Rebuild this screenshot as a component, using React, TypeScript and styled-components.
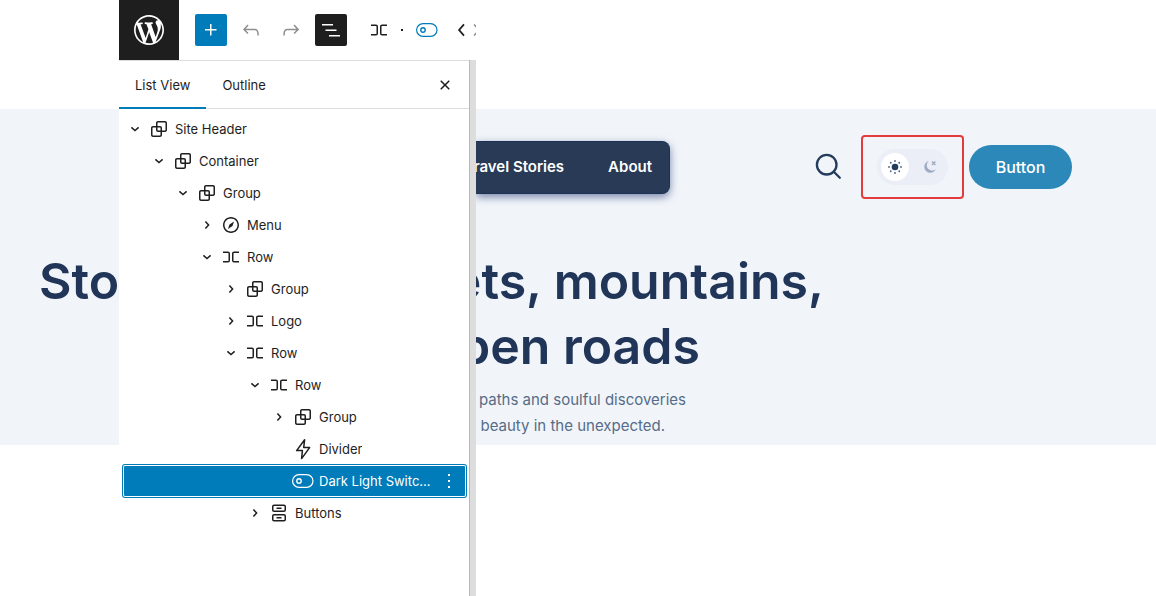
import React, { ReactNode } from "react";
import styled, { createGlobalStyle, css } from "styled-components";

const GlobalStyle = createGlobalStyle`
  *, *::before, *::after { box-sizing: border-box; }
  body { margin: 0; background: #fff; font-family: Inter, "Liberation Sans", sans-serif; }
  button { font: inherit; color: inherit; border: 0; padding: 0; background: none; cursor: pointer; }
  svg { display: block; flex: none; }
`;

const ink = "#1e1e1e";
const blue = "#007cba";
const navy = "#203557";

/* ---------- page frame ---------- */

const Page = styled.div`
  display: grid;
  grid-template-columns: 119px 357px minmax(0, 1fr);
  grid-template-rows: 109px auto 1fr;
  min-height: 100vh;
`;

const band = css`
  grid-row: 2;
  overflow: hidden;
  padding-top: 26px;
  background: #f1f5fa;
  color: ${navy};
`;

const CanvasStart = styled.div`
  ${band}
  grid-column: 1;
  padding-left: 39px;
`;

const Canvas = styled.main`
  ${band}
  grid-column: 3;
  padding-bottom: 6px;
`;

const Editor = styled.aside`
  grid-column: 2;
  grid-row: 1 / -1;
  display: flex;
  flex-direction: column;
  min-width: 0;
  background: #fff;
  color: ${ink};
`;

/* ---------- editor toolbar ---------- */

const Toolbar = styled.header`
  display: flex;
  align-items: center;
  gap: 8px;
  height: 60px;
  overflow: hidden;
`;

const SiteHub = styled.a`
  display: grid;
  place-items: center;
  flex: none;
  width: 60px;
  height: 60px;
  margin-right: 8px;
  background: ${ink};
  color: #fff;
`;

const ToolButton = styled.button<{ $fill?: string; $color?: string }>`
  display: grid;
  place-items: center;
  flex: none;
  width: 32px;
  height: 32px;
  border-radius: 2px;
  background: ${(p) => p.$fill ?? "transparent"};
  color: ${(p) => p.$color ?? ink};
`;

const Breadcrumb = styled.nav`
  display: flex;
  align-items: center;
  flex: none;
  margin-left: 8px;
`;

const Crumb = styled.button<{ $color?: string; $width: number }>`
  display: flex;
  justify-content: center;
  flex: none;
  width: ${(p) => p.$width}px;
  color: ${(p) => p.$color ?? ink};
`;

const Dot = styled.span`
  width: 2px;
  height: 2px;
  margin: 0 6px;
  background: ${ink};
`;

/* ---------- list view panel ---------- */

const PanelFrame = styled.div`
  display: flex;
  flex: 1;
`;

const Panel = styled.section`
  flex: 1;
  min-width: 0;
  border-top: 1px solid #ddd;
`;

const Gutter = styled.div`
  width: 7px;
  border-left: 1px solid #b8b8b8;
  background: #ddd;
`;

const Tabs = styled.div`
  display: flex;
  align-items: stretch;
  height: 48px;
  border-bottom: 1px solid #ddd;
`;

const Tab = styled.button<{ $active?: boolean }>`
  height: 48px;
  padding: 0 16px;
  font-size: 13px;
  line-height: 20px;
  box-shadow: ${(p) => (p.$active ? `inset 0 -2px 0 ${blue}` : "none")};
`;

const CloseButton = styled.button`
  display: grid;
  place-items: center;
  width: 24px;
  margin: 0 12px 0 auto;
`;

const Tree = styled.ul`
  margin: 0;
  padding: 4px 3px 0 4px;
  list-style: none;
`;

const Row = styled.li<{ $level: number; $selected?: boolean }>`
  display: flex;
  align-items: center;
  height: 32px;
  padding-left: ${(p) => p.$level * 24}px;
  border-radius: 2px;
  ${(p) =>
    p.$selected &&
    css`
      background: ${blue};
      color: #fff;
      box-shadow: inset 0 0 0 1px #fff, 0 0 0 1px ${blue};
    `}
`;

const Toggle = styled.button`
  display: grid;
  place-items: center;
  flex: none;
  width: 24px;
  height: 24px;
`;

const Block = styled.button`
  display: flex;
  align-items: center;
  gap: 4px;
  min-width: 0;
  font-size: 13px;
  line-height: 20px;
`;

const Label = styled.span`
  max-width: 112px;
  overflow: hidden;
  text-overflow: ellipsis;
  white-space: nowrap;
`;

const Options = styled.button`
  margin: 0 5px 0 auto;
`;

/* ---------- site preview ---------- */

const SiteNav = styled.div`
  display: flex;
  align-items: center;
  height: 64px;
`;

const Menu = styled.nav`
  display: flex;
  align-items: center;
  justify-content: flex-end;
  gap: 44px;
  flex: none;
  width: 194px;
  height: 53px;
  padding-right: 17px;
  border: 1px solid #1d3152;
  border-left: 0;
  border-radius: 0 8px 8px 0;
  background: #283a56;
  box-shadow: 0 3px 8px rgba(40, 62, 115, 0.6);
`;

const MenuLink = styled.a`
  color: #fff;
  font-size: 15px;
  line-height: 24px;
  font-weight: 600;
  text-decoration: none;
  white-space: nowrap;
`;

const SearchButton = styled.button`
  margin-left: 144px;
`;

const Highlight = styled.div`
  display: grid;
  place-items: center;
  flex: none;
  width: 103px;
  height: 64px;
  margin-left: 19px;
  border: 2px solid #e23c3c;
  border-radius: 4px;
`;

const ThemeSwitch = styled.button`
  display: flex;
  align-items: center;
  justify-content: space-between;
  width: 71px;
  height: 36px;
  padding: 0 11px 0 4px;
  border-radius: 18px;
  background: #ebeef6;
`;

const Knob = styled.span`
  display: grid;
  place-items: center;
  width: 28px;
  height: 28px;
  border-radius: 50%;
  background: #fff;
`;

const CallToAction = styled.button`
  flex: none;
  width: 103px;
  height: 44px;
  margin-left: 5px;
  border-radius: 22px;
  background: #2c88b9;
  color: #fff;
  font-size: 16px;
  line-height: 24px;
  font-weight: 500;
`;

const headline = css`
  font-size: 50px;
  line-height: 65px;
  font-weight: 600;
  white-space: nowrap;
`;

const HeadlineStart = styled.div`
  ${headline}
  margin-top: 114px;
`;

const Headline = styled.h1`
  ${headline}
  margin: 50px 0 0;
`;

const EndAligned = styled.span<{ $width: number }>`
  display: flex;
  justify-content: flex-end;
  width: ${(p) => p.$width}px;
`;

const Intro = styled.p`
  margin: 8px 0 0;
  color: #566c88;
  font-size: 15px;
  line-height: 26px;
  white-space: nowrap;
`;

/* ---------- icons ---------- */

const Glyph = ({ d, size = 24, children }: { d?: string; size?: number; children?: ReactNode }) => (
  <svg width={size} height={size} viewBox="0 0 24 24" fill="currentColor" aria-hidden="true">
    {d && <path d={d} />}
    {children}
  </svg>
);

const paths = {
  plus: "M11 12.5V17.5H12.5V12.5H17.5V11H12.5V6H11V11H6V12.5H11Z",
  undo: "M18.3 11.7c-.6-.6-1.4-.9-2.3-.9H6.7l2.9-3.3-1.1-1-4.5 5L8.5 16l1-1-2.7-2.7H16c.5 0 .9.2 1.3.5 1 1 1 3.4 1 4.5v.3h1.5v-.2c0-1.5 0-4.3-1.5-5.7z",
  redo: "M15.6 6.5l-1.1 1 2.9 3.3H8c-.9 0-1.7.3-2.3.9-1.4 1.5-1.4 4.2-1.4 5.6v.2h1.5v-.3c0-1.1 0-3.5 1-4.5.3-.3.7-.5 1.3-.5h9.2L14.5 15l1.1 1.1 4.6-4.6-4.6-5z",
  list: "M3 6h11v1.5H3V6Zm3.5 5.5h11V13h-11v-1.5ZM21 17H10v1.5h11V17Z",
  close: "M12 13.06l3.712 3.713 1.061-1.06L13.061 12l3.712-3.712-1.06-1.06L12 10.938 8.288 7.227l-1.061 1.06L10.939 12l-3.712 3.712 1.06 1.061L12 13.061z",
  group: "M18 4h-7c-1.1 0-2 .9-2 2v3H6c-1.1 0-2 .9-2 2v7c0 1.1.9 2 2 2h7c1.1 0 2-.9 2-2v-3h3c1.1 0 2-.9 2-2V6c0-1.1-.9-2-2-2zm-4.5 14c0 .3-.2.5-.5.5H6c-.3 0-.5-.2-.5-.5v-7c0-.3.2-.5.5-.5h3V13c0 1.1.9 2 2 2h2.5v3zm0-4.5H11c-.3 0-.5-.2-.5-.5v-2.5H13c.3 0 .5.2.5.5v2.5zm5-.5c0 .3-.2.5-.5.5h-3V11c0-1.1-.9-2-2-2h-2.5V6c0-.3.2-.5.5-.5h7c.3 0 .5.2.5.5v7z",
  row: "M4 6.5h5a2 2 0 0 1 2 2v7a2 2 0 0 1-2 2H4V16h5a.5.5 0 0 0 .5-.5v-7A.5.5 0 0 0 9 8H4V6.5Zm16 0h-5a2 2 0 0 0-2 2v7a2 2 0 0 0 2 2h5V16h-5a.5.5 0 0 1-.5-.5v-7A.5.5 0 0 1 15 8h5V6.5Z",
  compass: "M12 4c-4.4 0-8 3.6-8 8s3.6 8 8 8 8-3.6 8-8-3.6-8-8-8zm0 14.5c-3.6 0-6.5-2.9-6.5-6.5S8.4 5.5 12 5.5s6.5 2.9 6.5 6.5-2.9 6.5-6.5 6.5zM9 16l4.5-3L15 8.4l-4.5 3L9 16z",
  more: "M13 19h-2v-2h2v2zm0-6h-2v-2h2v2zm0-6h-2V5h2v2z",
};

const BoltIcon = () => (
  <Glyph>
    <path d="M13.6 2.8 5.6 13.6h5.8l-.8 8 8-11h-5.9z" fill="none" stroke="currentColor" strokeWidth="1.5" strokeLinejoin="round" />
  </Glyph>
);

const ButtonsIcon = () => (
  <Glyph>
    <g fill="none" stroke="currentColor" strokeWidth="1.5">
      <rect x="5.75" y="4.25" width="12.5" height="6" rx="1.3" />
      <rect x="5.75" y="13.75" width="12.5" height="6" rx="1.3" />
      <path d="M9.5 7.25h5M9.5 16.75h5" />
    </g>
  </Glyph>
);

const SwitchIcon = () => (
  <Glyph>
    <g fill="none" stroke="currentColor" strokeWidth="1.2">
      <rect x="1.6" y="5.6" width="20.4" height="12.8" rx="6.4" />
      <circle cx="8" cy="12" r="2.2" strokeWidth="1.4" />
    </g>
  </Glyph>
);

const Chevron = ({ open }: { open?: boolean }) => (
  <Glyph>
    <path d={open ? "M8.4 10.4 12 13.6l3.6-3.2" : "M10.4 8.4l3.2 3.6-3.2 3.6"} fill="none" stroke="currentColor" strokeWidth="1.5" />
  </Glyph>
);

const WordPressIcon = () => (
  <svg width="36" height="36" viewBox="-2 -2 24 24" fill="currentColor" aria-hidden="true">
    <path d="M20 10c0-5.51-4.49-10-10-10C4.48 0 0 4.49 0 10c0 5.52 4.48 10 10 10 5.51 0 10-4.48 10-10zM7.78 15.37L4.37 6.22c.55-.02 1.17-.08 1.17-.08.5-.06.44-1.13-.06-1.11 0 0-1.45.11-2.37.11-.18 0-.37 0-.58-.01C4.12 2.69 6.87 1.11 10 1.11c2.33 0 4.45.87 6.05 2.34-.68-.11-1.65.39-1.65 1.58 0 .74.45 1.36.9 2.1.35.61.55 1.36.55 2.46 0 1.49-1.4 5-1.4 5l-3.03-8.37c.54-.02.82-.17.82-.17.5-.05.44-1.25-.06-1.22 0 0-1.44.12-2.38.12-.87 0-2.33-.12-2.33-.12-.5-.03-.56 1.2-.06 1.22l.92.08 1.26 3.41zM17.41 10c.24-.64.74-1.87.43-4.25.7 1.29 1.05 2.71 1.05 4.25 0 3.29-1.73 6.24-4.4 7.78.97-2.59 1.94-5.2 2.92-7.78zM6.1 18.09C3.12 16.65 1.11 13.53 1.11 10c0-1.3.23-2.48.72-3.59C3.25 10.3 4.67 14.2 6.1 18.09zm4.03-6.63l2.58 6.98c-.86.29-1.76.45-2.71.45-.79 0-1.57-.11-2.29-.33.81-2.38 1.62-4.74 2.42-7.1z" />
  </svg>
);

const SearchIcon = () => (
  <svg width="28" height="28" viewBox="0 0 28 28" fill="none" stroke="#243c5c" strokeWidth="2.3" strokeLinecap="round" aria-hidden="true">
    <circle cx="12.7" cy="11.7" r="9.8" />
    <path d="M19.8 18.8l6 6" />
  </svg>
);

const rays = [0, 45, 90, 135, 180, 225, 270, 315];

const SunIcon = () => (
  <svg width="16" height="16" viewBox="-8 -8 16 16" fill="#243c5c" aria-hidden="true">
    <circle r="3.3" />
    {rays.map((angle) => (
      <circle key={angle} cx="6" r="0.9" opacity="0.8" transform={`rotate(${angle})`} />
    ))}
  </svg>
);

const MoonIcon = () => (
  <svg width="14" height="14" viewBox="0 0 14 14" aria-hidden="true">
    <path d="M5.6 1A6 6 0 1 0 12.8 9.2 5.2 5.2 0 0 1 5.6 1Z" fill="#9fabc0" />
    <path d="M9 1.6l3.4 3.4M12.4 1.6L9 5" stroke="#9fabc0" strokeWidth="1.4" />
  </svg>
);

/* ---------- data ---------- */

type Item = { label: string; level: number; icon: ReactNode; open?: boolean; leaf?: boolean; selected?: boolean };

const group = <Glyph d={paths.group} />;
const row = <Glyph d={paths.row} />;

const items: Item[] = [
  { label: "Site Header", level: 0, icon: group, open: true },
  { label: "Container", level: 1, icon: group, open: true },
  { label: "Group", level: 2, icon: group, open: true },
  { label: "Menu", level: 3, icon: <Glyph d={paths.compass} /> },
  { label: "Row", level: 3, icon: row, open: true },
  { label: "Group", level: 4, icon: group },
  { label: "Logo", level: 4, icon: row },
  { label: "Row", level: 4, icon: row, open: true },
  { label: "Row", level: 5, icon: row, open: true },
  { label: "Group", level: 6, icon: group },
  { label: "Divider", level: 6, icon: <BoltIcon />, leaf: true },
  { label: "Dark Light Switc...", level: 6, icon: <SwitchIcon />, leaf: true, selected: true },
  { label: "Buttons", level: 5, icon: <ButtonsIcon /> },
];

const LeafSpace = styled.span`
  flex: none;
  width: 24px;
`;

export default function App() {
  return (
    <>
      <GlobalStyle />
      <Page>
        <CanvasStart>
          <HeadlineStart>Sto</HeadlineStart>
        </CanvasStart>

        <Editor>
          <Toolbar>
            <SiteHub href="#" aria-label="WordPress"><WordPressIcon /></SiteHub>
            <ToolButton $fill={blue} $color="#fff" aria-label="Add block"><Glyph d={paths.plus} /></ToolButton>
            <ToolButton $color="#8f8f8f" aria-label="Undo"><Glyph d={paths.undo} /></ToolButton>
            <ToolButton $color="#8f8f8f" aria-label="Redo"><Glyph d={paths.redo} /></ToolButton>
            <ToolButton $fill={ink} $color="#fff" aria-label="List view"><Glyph d={paths.list} /></ToolButton>
            <Breadcrumb>
              <Crumb $width={32} aria-label="Row">{row}</Crumb>
              <Dot />
              <Crumb $width={36} $color={blue} aria-label="Switcher"><SwitchIcon /></Crumb>
              <Crumb $width={32} aria-label="Move left">
                <Glyph><path d="M15 6.4 10.1 12l4.9 5.6" fill="none" stroke="currentColor" strokeWidth="1.8" /></Glyph>
              </Crumb>
              <Crumb $width={4} $color="#8f8f8f" aria-label="Move right">
                <Glyph><path d="M7 6.4l5 5.6-5 5.6" fill="none" stroke="currentColor" strokeWidth="1.5" /></Glyph>
              </Crumb>
            </Breadcrumb>
          </Toolbar>

          <PanelFrame>
            <Panel>
              <Tabs role="tablist">
                <Tab role="tab" aria-selected $active>List View</Tab>
                <Tab role="tab" aria-selected={false}>Outline</Tab>
                <CloseButton aria-label="Close"><Glyph d={paths.close} /></CloseButton>
              </Tabs>
              <Tree>
                {items.map((item, index) => (
                  <Row key={index} $level={item.level} $selected={item.selected}>
                    {item.leaf ? (
                      <LeafSpace />
                    ) : (
                      <Toggle aria-label={`Toggle ${item.label}`}><Chevron open={item.open} /></Toggle>
                    )}
                    <Block>
                      {item.icon}
                      <Label>{item.label}</Label>
                    </Block>
                    {item.selected && (
                      <Options aria-label="Options"><Glyph d={paths.more} /></Options>
                    )}
                  </Row>
                ))}
              </Tree>
            </Panel>
            <Gutter />
          </PanelFrame>
        </Editor>

        <Canvas>
          <SiteNav>
            <Menu>
              <MenuLink href="#">Travel Stories</MenuLink>
              <MenuLink href="#">About</MenuLink>
            </Menu>
            <SearchButton aria-label="Search"><SearchIcon /></SearchButton>
            <Highlight>
              <ThemeSwitch role="switch" aria-checked={false} aria-label="Dark mode">
                <Knob><SunIcon /></Knob>
                <MoonIcon />
              </ThemeSwitch>
            </Highlight>
            <CallToAction>Button</CallToAction>
          </SiteNav>
          <Headline>
            <EndAligned $width={348}>ets, mountains,</EndAligned>
            <EndAligned $width={224}>pen roads</EndAligned>
          </Headline>
          <Intro>
            <EndAligned $width={210}>paths and soulful discoveries</EndAligned>
            <EndAligned $width={189}>beauty in the unexpected.</EndAligned>
          </Intro>
        </Canvas>
      </Page>
    </>
  );
}
